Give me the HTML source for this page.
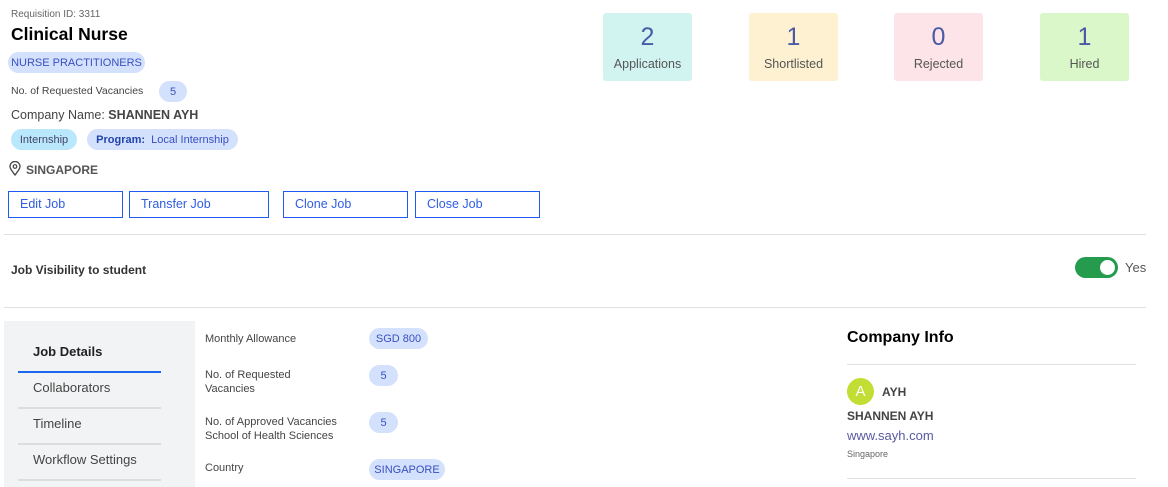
<!DOCTYPE html><html><head><style>
body{margin:0;width:1168px;height:487px;background:#fff;font-family:"Liberation Sans",sans-serif;position:relative;overflow:hidden;color:#333}
.a{position:absolute;white-space:nowrap}
.chip{position:absolute;background:#d3e1fd;color:#3a4fc0;border-radius:11px;font-size:11px;height:21px;display:flex;align-items:center;justify-content:center;white-space:nowrap}
.stat{position:absolute;top:13px;width:89px;height:68px;border-radius:3px;text-align:center}
.stat b{display:block;font-weight:normal;font-size:25px;color:#4b5aa6;margin-top:9px;line-height:30px;margin-bottom:3px}
.stat span{font-size:12.5px;color:#555}
.btn{position:absolute;top:191px;height:25px;border:1px solid #1f5cf5;color:#2f5de0;font-size:12.5px;line-height:25px;padding-left:11px}
.hr{position:absolute;height:1px;background:#e0e0e0}
.nav{position:absolute;left:33px;font-size:13px;color:#444}
.nl{position:absolute;left:18px;width:143px;height:2px;background:#dcdde0}
.lbl{position:absolute;left:205px;font-size:11px;color:#444;line-height:14px}
</style></head><body>
<div class="a" style="left:11px;top:9px;font-size:10px;color:#666">Requisition ID: 3311</div>
<div class="a" style="left:11px;top:24px;font-size:17.5px;font-weight:bold;color:#000">Clinical Nurse</div>
<div class="chip" style="left:8px;top:52px;width:137px">NURSE PRACTITIONERS</div>
<div class="a" style="left:11px;top:85px;font-size:10.5px;color:#444">No. of Requested Vacancies</div>
<div class="chip" style="left:159px;top:81px;width:28px">5</div>
<div class="a" style="left:11px;top:108px;font-size:12.5px;color:#444">Company Name: <b>SHANNEN AYH</b></div>
<div class="chip" style="left:11px;top:129px;width:66px;background:#b9e7fb;color:#446">Internship</div>
<div class="chip" style="left:87px;top:129px;width:151px"><b style="color:#2244aa">Program:</b>&nbsp; Local Internship</div>
<svg class="a" style="left:9px;top:161px" width="12" height="15" viewBox="0 0 12 15"><path d="M6 14C3 10 1 8 1 5.5a5 5 0 0110 0C11 8 9 10 6 14z" fill="none" stroke="#444" stroke-width="1.3"/><circle cx="6" cy="5.5" r="1.8" fill="none" stroke="#444" stroke-width="1.2"/></svg>
<div class="a" style="left:26px;top:163px;font-size:12px;font-weight:bold;color:#555">SINGAPORE</div>
<div class="btn" style="left:8px;width:102px">Edit Job</div>
<div class="btn" style="left:129px;width:127px">Transfer Job</div>
<div class="btn" style="left:283px;width:112px">Clone Job</div>
<div class="btn" style="left:415px;width:112px">Close Job</div>
<div class="stat" style="left:603px;background:#d2f4f1"><b>2</b><span>Applications</span></div>
<div class="stat" style="left:749px;background:#fdf1d2"><b>1</b><span>Shortlisted</span></div>
<div class="stat" style="left:894px;background:#fde4e8"><b>0</b><span>Rejected</span></div>
<div class="stat" style="left:1040px;background:#d9f7c8"><b>1</b><span>Hired</span></div>
<div class="hr" style="left:4px;top:234px;width:1142px"></div>
<div class="a" style="left:11px;top:263px;font-size:12px;font-weight:bold;color:#333">Job Visibility to student</div>
<div class="a" style="left:1075px;top:257px;width:43px;height:21px;border-radius:11px;background:#249b4d"><div style="position:absolute;right:3px;top:3px;width:15px;height:15px;border-radius:50%;background:#fff"></div></div>
<div class="a" style="left:1125px;top:260px;font-size:13px;color:#555">Yes</div>
<div class="hr" style="left:4px;top:307px;width:1142px"></div>
<div class="a" style="left:4px;top:321px;width:191px;height:166px;background:#f2f3f5"></div>
<div class="nav" style="top:344px;font-weight:bold;color:#222">Job Details</div>
<div class="nl" style="top:371px;background:#1a66f0"></div>
<div class="nav" style="top:380px">Collaborators</div>
<div class="nl" style="top:407px"></div>
<div class="nav" style="top:416px">Timeline</div>
<div class="nl" style="top:443px"></div>
<div class="nav" style="top:452px">Workflow Settings</div>
<div class="nl" style="top:479px"></div>
<div class="lbl" style="top:332px">Monthly Allowance</div>
<div class="chip" style="left:369px;top:328px;width:59px">SGD 800</div>
<div class="lbl" style="top:368px">No. of Requested<br>Vacancies</div>
<div class="chip" style="left:369px;top:365px;width:29px">5</div>
<div class="lbl" style="top:415px">No. of Approved Vacancies<br>School of Health Sciences</div>
<div class="chip" style="left:369px;top:412px;width:29px">5</div>
<div class="lbl" style="top:461px">Country</div>
<div class="chip" style="left:369px;top:459px;width:76px">SINGAPORE</div>
<div class="a" style="left:847px;top:329px;font-size:16px;font-weight:bold;color:#000">Company Info</div>
<div class="hr" style="left:847px;top:364px;width:289px"></div>
<div class="a" style="left:847px;top:378px;width:27px;height:27px;border-radius:50%;background:#c2dd33;color:#fff;font-size:15px;text-align:center;line-height:27px">A</div>
<div class="a" style="left:882px;top:385px;font-size:12px;font-weight:bold;color:#444">AYH</div>
<div class="a" style="left:847px;top:409px;font-size:12px;font-weight:bold;color:#444">SHANNEN AYH</div>
<div class="a" style="left:847px;top:428px;font-size:13px;color:#5a5aa0">www.sayh.com</div>
<div class="a" style="left:847px;top:449px;font-size:9px;color:#666">Singapore</div>
<div class="hr" style="left:847px;top:478px;width:289px"></div>
</body></html>
